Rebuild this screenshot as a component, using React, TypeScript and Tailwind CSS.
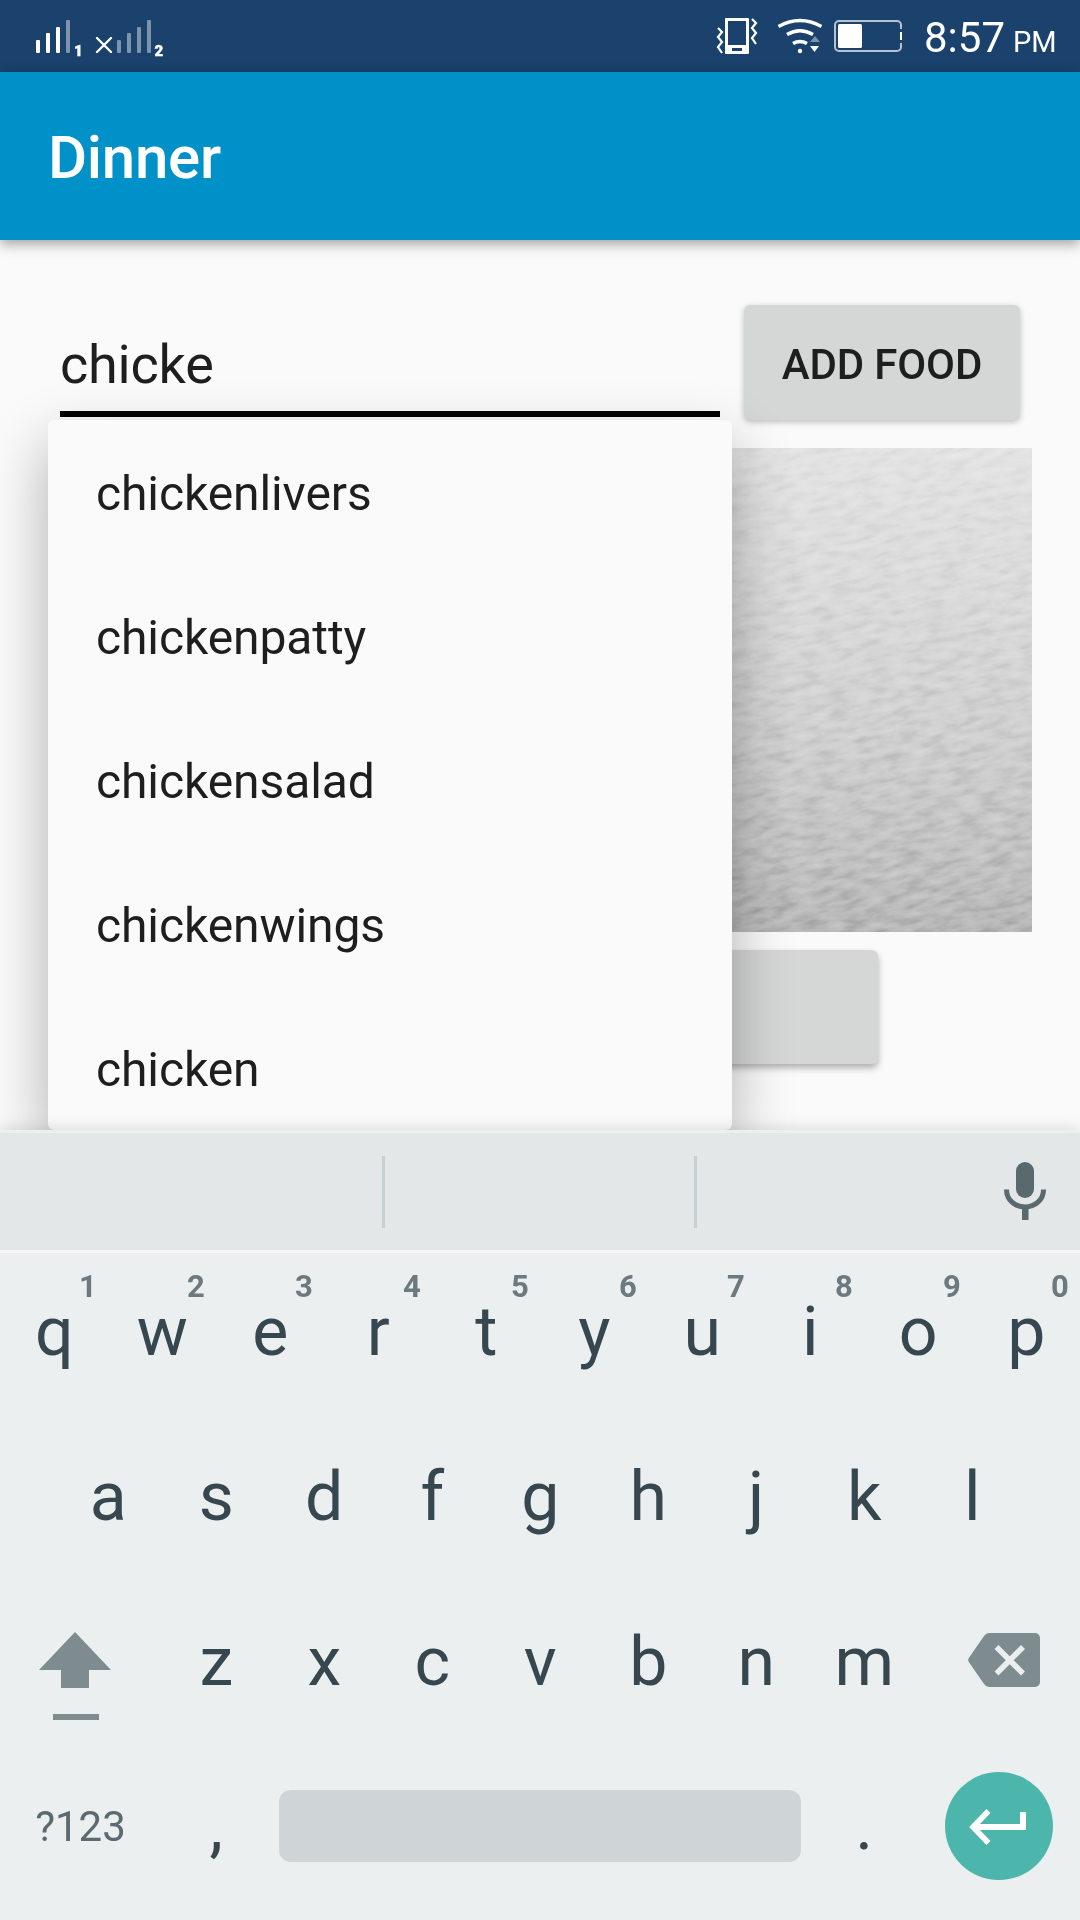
import React from "react";

const suggestions = ["chickenlivers", "chickenpatty", "chickensalad", "chickenwings", "chicken"];
const topKeys = ["q", "w", "e", "r", "t", "y", "u", "i", "o", "p"];
const middleKeys = ["a", "s", "d", "f", "g", "h", "j", "k", "l"];
const bottomKeys = ["z", "x", "c", "v", "b", "n", "m"];

function SignalIcons() {
  return (
    <svg className="mt-[16px] ml-[34px] h-[50px] w-[140px]" viewBox="34 16 140 50">
      <g fill="#fff">
        <rect x="36" y="40" width="4" height="13" rx="1" />
        <rect x="46" y="33" width="4" height="20" rx="1" />
        <rect x="56" y="27" width="4" height="26" rx="1" />
      </g>
      <g fill="#7d92ab">
        <rect x="66" y="20" width="4" height="33" rx="1" />
        <rect x="117" y="40" width="4" height="13" rx="1" />
        <rect x="127" y="33" width="4" height="20" rx="1" />
        <rect x="137" y="27" width="4" height="26" rx="1" />
        <rect x="147" y="20" width="4" height="33" rx="1" />
      </g>
      <path d="M97 38L111 52M111 38L97 52" stroke="#fff" strokeWidth="2.4" strokeLinecap="round" />
      <text x="74" y="56" fill="#fff" stroke="#fff" strokeWidth="0.4" fontSize="15" fontWeight="900" fontFamily="Roboto, sans-serif">1</text>
      <text x="154.5" y="56" fill="#fff" stroke="#fff" strokeWidth="0.4" fontSize="15" fontWeight="900" fontFamily="Roboto, sans-serif">2</text>
    </svg>
  );
}

function StatusIcons() {
  return (
    <svg className="mt-[14px] h-[44px] w-[190px]" viewBox="714 14 190 44" fill="none">
      <path fillRule="evenodd" fill="#fff" d="M726 18h22a1 1 0 0 1 1 1v34a1 1 0 0 1-1 1h-22a1 1 0 0 1-1-1v-34a1 1 0 0 1 1-1zM728 21v24h18V21zM732 48v3h10v-3z" />
      <path d="M718 28l4 4-4 5 4 5-4 5 4 6M752 19l4 4-4 5 4 5-4 5 4 6" stroke="#fff" strokeWidth="2.2" />
      <path d="M778.5 26.5Q800 14.500 821.500 26.500" stroke="#fff" strokeWidth="3.500" />
      <path d="M787 34.500Q800 27 813 34.500" stroke="#fff" strokeWidth="3.500" />
      <path d="M793 43.500Q800 39.500 807 43.500" stroke="#fff" strokeWidth="3.500" />
      <circle cx="800" cy="51" r="2.200" fill="#fff" />
      <path d="M810 42l5-6 5 6z" fill="#7d92ab" />
      <path d="M810 46h9l-4.500 6z" fill="#fff" />
      <path d="M901 29V25a4 4 0 0 0-4-4H839a4 4 0 0 0-4 4V47a4 4 0 0 0 4 4H897a4 4 0 0 0 4-4V43" stroke="#b5c2d2" strokeWidth="2" />
      <path d="M901 32v8" stroke="#fff" strokeWidth="2" />
      <rect x="838" y="24" width="24" height="24" rx="1.500" fill="#fff" />
    </svg>
  );
}

function PaperPhoto() {
  return (
    <svg className="h-[484px] w-[984px]" viewBox="0 0 984 484">
      <defs>
        <linearGradient id="paperShade" x1="0" y1="0" x2="0" y2="1">
          <stop offset="0" stopColor="#e3e3e3" />
          <stop offset="0.3" stopColor="#dadada" />
          <stop offset="0.6" stopColor="#cfcfcf" />
          <stop offset="0.85" stopColor="#c1c1c1" />
          <stop offset="1" stopColor="#b7b7b7" />
        </linearGradient>
        <linearGradient id="grainFade" x1="0" y1="0" x2="0" y2="1">
          <stop offset="0" stopColor="#fff" stopOpacity="0.7" />
          <stop offset="1" stopColor="#fff" stopOpacity="0.8" />
        </linearGradient>
        <filter id="grain" x="0" y="0" width="100%" height="100%" colorInterpolationFilters="sRGB">
          <feTurbulence type="fractalNoise" baseFrequency="0.045 0.14" numOctaves="3" seed="8" />
          <feColorMatrix values="0.75 0 0 0 0.125  0.75 0 0 0 0.125  0.75 0 0 0 0.125  0 0 0 0 1" />
        </filter>
        <mask id="grainMask">
          <rect width="984" height="484" fill="url(#grainFade)" />
        </mask>
      </defs>
      <rect width="984" height="484" fill="url(#paperShade)" />
      <g mask="url(#grainMask)" className="mix-blend-soft-light">
        <rect x="500" y="-200" width="700" height="900" filter="url(#grain)" transform="rotate(-10 834 242)" />
      </g>
    </svg>
  );
}

function Key({ label, hint }: { label: string; hint?: string }) {
  return (
    <div className="relative flex h-[165px] w-[108px] items-center justify-center pl-[0.5px] text-[68px] leading-none text-[#37474f]">
      {label}
      {hint && (
        <span className="absolute top-[22px] left-[68px] w-[40px] text-center text-[31px] leading-[32px] font-bold text-[#6c7a80]">
          {hint}
        </span>
      )}
    </div>
  );
}

function Keyboard() {
  return (
    <div className="relative z-20 h-[790px] overflow-hidden bg-[#ebeff0] shadow-[0_0_16px_rgba(0,0,0,0.16)]">
      <div className="flex h-[123px] items-center border-t-[3px] border-b-[3px] border-t-[#ebf0f0] border-b-[#f5f7f7] bg-[#e3e7e8]">
        <div className="ml-[382px] h-[72px] w-[3px] bg-[#c8d1d2]" />
        <div className="ml-[309px] h-[72px] w-[3px] bg-[#c8d1d2]" />
        <svg className="mb-[2px] ml-[307px] h-[58px] w-[42px]" viewBox="0 0 42 58" fill="none">
          <rect x="12" y="0" width="18" height="36" rx="9" fill="#5a696e" />
          <path d="M2.500 27.500C2.500 38 11 45 21 45S39.500 38 39.500 27.500" stroke="#5a696e" strokeWidth="5" />
          <path d="M18 45h6.500v13h-6.500z" fill="#5a696e" />
        </svg>
      </div>
      <div className="-mt-1 flex flex-col">
        <div className="flex">
          {topKeys.map((k, i) => (
            <Key key={k} label={k} hint={String((i + 1) % 10)} />
          ))}
        </div>
        <div className="flex justify-center">
          {middleKeys.map((k) => (
            <Key key={k} label={k} />
          ))}
        </div>
        <div className="flex">
          <div className="flex h-[165px] w-[162px] pt-[53px] pl-[39px]">
            <svg className="h-[88px] w-[72px]" viewBox="0 0 72 88" fill="#7f8c8f">
              <path d="M36 0L72 38H50V56H22V38H0z" />
              <rect x="14" y="82" width="46" height="6" />
            </svg>
          </div>
          {bottomKeys.map((k) => (
            <Key key={k} label={k} />
          ))}
          <div className="flex h-[165px] w-[162px] pt-[54px] pl-[50px]">
            <svg className="h-[54px] w-[72px]" viewBox="0 0 72 54">
              <path d="M21 0H67a5 5 0 0 1 5 5V49a5 5 0 0 1-5 5H21q-3 0-5-3L.8 29q-1.200-2 0-4L16 3q2-3 5-3z" fill="#7f8c8f" />
              <path d="M28.500 14L55 40.500M55 14L28.500 40.500" stroke="#ebeff0" strokeWidth="5.500" />
            </svg>
          </div>
        </div>
        <div className="flex h-[163px] items-center">
          <div className="w-[162px] pt-[2px] pr-px text-center text-[42px] leading-none text-[#5a6a70]">?123</div>
          <Key label="," />
          <div className="mx-[9px] h-[72px] w-[522px] rounded-[12px] bg-[#cfd4d7]" />
          <Key label="." />
          <div className="ml-[27px] flex size-[108px] items-center justify-center rounded-full bg-[#4db6ac] pt-[3px] pr-[3px]">
            <svg className="h-[36px] w-[57px]" viewBox="0 0 57 36" fill="none" stroke="#fff">
              <path d="M19.500 2L4 18L19.500 34" strokeWidth="5.600" />
              <path d="M4 18H54V3" strokeWidth="6" />
            </svg>
          </div>
        </div>
      </div>
    </div>
  );
}

export default function App() {
  return (
    <div className="h-[1920px] w-[1080px] overflow-hidden bg-[#fafafa] font-['Roboto',sans-serif] text-[#1e1e1e]">
      <div className="flex h-[72px] justify-between bg-[#1a426c] text-white">
        <SignalIcons />
        <div className="flex">
          <StatusIcons />
          <div className="ml-5 flex h-[72px] w-[156px] items-baseline pt-[13px] leading-[50px] whitespace-nowrap">
            <span className="text-[42px]">8:57</span>
            <span className="ml-[8px] text-[29px]">PM</span>
          </div>
        </div>
      </div>
      <header className="relative z-10 flex h-[168px] items-center bg-[#0091c8] pt-[4px] pl-12 shadow-[0_4px_12px_rgba(0,0,0,0.36)]">
        <h1 className="text-[60px] leading-none font-medium tracking-[-0.3px] text-white">Dinner</h1>
      </header>
      <main className="relative flex h-[890px] flex-col">
        <div className="flex pt-[65px] pl-[60px]">
          <div className="flex h-[112px] w-[660px] items-center border-b-[6px] border-black pt-[13px] text-[54px] leading-none tracking-[-0.2px]">
            chicke
          </div>
          <button className="ml-6 flex h-[115px] w-[276px] items-center justify-center rounded-[6px] bg-[#d5d7d6] pt-[4px] text-[42px] leading-none font-medium tracking-[-0.15px] shadow-[0_2px_6px_rgba(0,0,0,0.25)]">
            ADD FOOD
          </button>
        </div>
        <div className="mt-[28px] ml-12 flex w-[984px] flex-col">
          <PaperPhoto />
          <div className="mt-[18px] ml-[154px] h-[114px] w-[676px] rounded-[6px] bg-[#d5d7d6] shadow-[0_4px_7px_rgba(0,0,0,0.3)]" />
        </div>
        <div className="absolute top-[180px] left-12 h-[710px] w-[684px] rounded-[6px] bg-[#fafafa] shadow-[0_24px_60px_rgba(0,0,0,0.3)]">
          {suggestions.map((s) => (
            <div key={s} className="flex h-[144px] items-center pt-[3px] pl-12 text-[48px] leading-none tracking-[-0.1px] last:h-[134px] last:pt-[13px]">
              {s}
            </div>
          ))}
        </div>
      </main>
      <Keyboard />
    </div>
  );
}
